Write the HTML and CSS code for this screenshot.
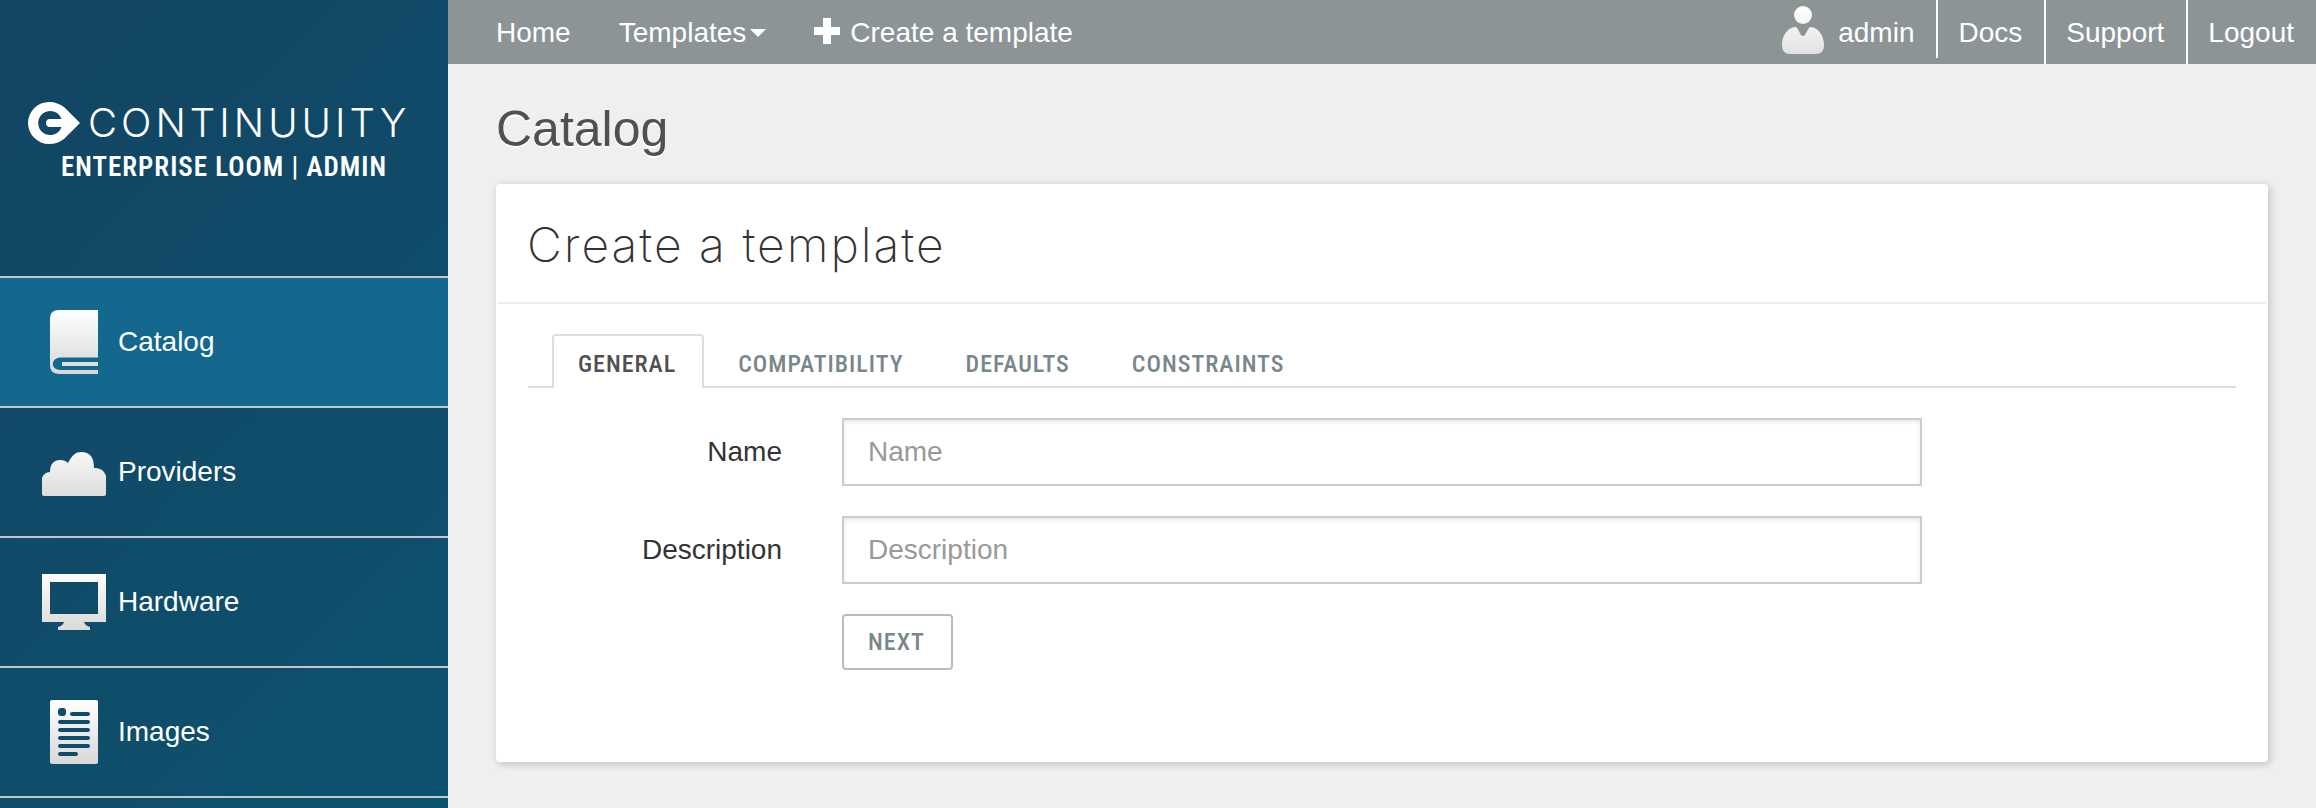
FILE: index.html
```html
<!DOCTYPE html>
<html lang="en">
<head>
<meta charset="utf-8">
<title>Create a template</title>
<link rel="stylesheet" href="styles.css">
</head>
<body>
<svg class="defs" aria-hidden="true">
  <defs>
    <linearGradient id="silver" x1="0" y1="0" x2="0" y2="64" gradientUnits="userSpaceOnUse">
      <stop offset="0" stop-color="#ffffff"/>
      <stop offset="1" stop-color="#d8d8d8"/>
    </linearGradient>
  </defs>
</svg>
<div class="layout">
  <aside class="sidebar">
    <div class="brand">
      <div class="logo">
        <svg class="logo-mark" viewBox="0 0 52 42" aria-hidden="true">
          <path fill="#fff" fill-rule="evenodd" d="M21 0C27 0 32 2 36 5L52 21L36 37C32 40 27 42 21 42A21 21 0 0 1 21 0ZM33.500 17A12 12 0 1 0 33.500 25H22A4 4 0 0 1 22 17Z"/>
        </svg>
        <span class="logo-word">CONTINUUITY</span>
      </div>
      <div class="product">ENTERPRISE LOOM | ADMIN</div>
    </div>
    <nav class="side-nav">
      <a class="side-link active" href="#catalog">
        <svg viewBox="0 0 64 64" fill="url(#silver)" aria-hidden="true"><path d="M17 0H56V47.500H18C8.500 48.500 8.500 59.500 18 60H56V64H17C11 64 8 60.500 8 55V9C8 3 11 0 17 0ZM20 52H56V56H20Z"/></svg>
        <span>Catalog</span>
      </a>
      <a class="side-link" href="#providers">
        <svg viewBox="0 0 64 64" fill="url(#silver)" aria-hidden="true"><path d="M0 54V38C1 35 4 32 8 32C8 24 12 20 18 20C22 20 24 21 26 23C30 15 34 12 39 12C48 12 52 17 52 28C58 28 62 30 64 36V54Q64 56 62 56H2Q0 56 0 54Z"/></svg>
        <span>Providers</span>
      </a>
      <a class="side-link" href="#hardware">
        <svg viewBox="0 0 64 64" fill="url(#silver)" aria-hidden="true"><path fill-rule="evenodd" d="M0 4H64V52H42C43 55 45 56 48 57V60H16V57C19 56 21 55 22 52H0ZM8 12V44H56V12Z"/></svg>
        <span>Hardware</span>
      </a>
      <a class="side-link" href="#images">
        <svg viewBox="0 0 64 64" aria-hidden="true"><rect x="8" width="48" height="64" rx="2" fill="url(#silver)"/><rect x="16" y="8" width="8" height="8" rx="3" fill="#0f4e6b"/><path d="M30 14H46M18 22H46M18 30H46M18 38H46M18 46H46M18 54H34" stroke="#0f4e6b" stroke-width="4" stroke-linecap="round"/></svg>
        <span>Images</span>
      </a>
    </nav>
  </aside>
  <div class="main">
    <header class="topbar">
      <nav class="menu">
        <a href="#home">Home</a>
        <a href="#templates">Templates<svg class="caret" viewBox="0 0 16 8" aria-hidden="true"><path fill="#fff" d="M0 0H16L8 8Z"/></svg></a>
        <a href="#create"><svg class="plus" viewBox="0 0 26 26" aria-hidden="true"><path fill="#fff" d="M9 0H17V9H26V17H17V26H9V17H0V9H9Z"/></svg>Create a template</a>
      </nav>
      <nav class="account">
        <span class="user">
          <svg viewBox="0 0 42 48" fill="url(#silver)" aria-hidden="true"><ellipse cx="21" cy="9" rx="9" ry="9"/><path d="M14 21C17 23 18 30 21 30S25 23 28 21C35 21 42 28 42 39C42 45 39 48 34 48H8C3 48 0 45 0 39C0 28 7 21 14 21Z"/></svg>
          <span>admin</span>
        </span>
        <a href="#docs">Docs</a>
        <a href="#support">Support</a>
        <a href="#logout">Logout</a>
      </nav>
    </header>
    <main class="content">
      <h1>Catalog</h1>
      <section class="panel">
        <h2>Create a template</h2>
        <div class="panel-body">
          <div class="tabs" role="tablist">
            <button class="tab selected" type="button" role="tab" aria-selected="true">GENERAL</button>
            <button class="tab" type="button" role="tab" aria-selected="false">COMPATIBILITY</button>
            <button class="tab" type="button" role="tab" aria-selected="false">DEFAULTS</button>
            <button class="tab" type="button" role="tab" aria-selected="false">CONSTRAINTS</button>
          </div>
          <form class="form">
            <label for="name">Name</label>
            <input id="name" type="text" placeholder="Name">
            <label for="description">Description</label>
            <input id="description" type="text" placeholder="Description">
            <button class="next" type="button">NEXT</button>
          </form>
        </div>
      </section>
    </main>
  </div>
</div>
</body>
</html>
```
FILE: styles.css
```css
* { box-sizing: border-box; }

body {
  margin: 0;
  background: #eef0ef;
  color: #333;
  font: 28px/40px "Liberation Sans", Arial, sans-serif;
}

a { color: inherit; text-decoration: none; }
svg { display: block; flex: none; }
.defs { position: absolute; width: 0; height: 0; }

.layout {
  display: grid;
  grid-template-columns: 448px minmax(0, 1fr);
  min-height: 100vh;
}

/* Sidebar */
.sidebar {
  background: linear-gradient(135deg, #134463, #0c536f);
  color: #fff;
}
.brand {
  height: 276px;
  padding: 102px 28px 0;
}
.logo { display: flex; align-items: center; gap: 8px; height: 42px; }
.logo-mark { width: 52px; height: 42px; }
.logo-word {
  font-family: Inter, "DejaVu Sans", sans-serif;
  font-size: 40px;
  font-weight: 300;
  letter-spacing: 4px;
}
.product {
  padding-top: 3px;
  font-family: "Roboto Condensed", "Liberation Sans Narrow", sans-serif;
  font-size: 27px;
  font-weight: 600;
  letter-spacing: 1px;
  text-align: center;
  white-space: nowrap;
}
.side-nav { border-bottom: 2px solid #c6c6c6; }
.side-link {
  display: flex;
  align-items: center;
  gap: 12px;
  height: 130px;
  padding: 0 42px;
  border-top: 2px solid #c6c6c6;
}
.side-link.active { background: #14678d; }
.side-link svg { width: 64px; height: 64px; }

/* Top bar */
.topbar {
  display: flex;
  justify-content: space-between;
  height: 64px;
  padding-left: 48px;
  background: #8c9495;
  color: #fff;
}
.menu, .account { display: flex; }
.menu { gap: 48px; }
.menu a, .account a, .user { display: flex; align-items: center; padding-top: 2px; }
.caret { width: 16px; height: 8px; margin-left: 4px; }
.plus { width: 26px; height: 26px; margin: 0 10px 4px 0; }
.account a { padding: 2px 22px 0 20px; border-left: 2px solid #fff; }
.account a:first-of-type { height: 58px; padding-top: 8px; }
.user { gap: 14px; padding-right: 22px; }
.user svg { width: 42px; height: 48px; margin-bottom: 6px; }

/* Content */
.content { padding: 35px 48px 46px; }
h1 {
  margin: 0 0 25px;
  color: #505050;
  font-size: 50px;
  font-weight: 400;
  line-height: 60px;
  text-shadow: 0 2px 0 #fff;
}
.panel {
  min-height: 578px;
  padding: 0 2px;
  border-radius: 4px;
  background: #fff;
  box-shadow: 2px 2px 8px rgba(0, 0, 0, .2);
}
h2 {
  margin: 0;
  padding: 31px 29px 27px;
  border-bottom: 2px solid #eee;
  font-family: Inter, Roboto, sans-serif;
  font-size: 48px;
  font-weight: 200;
  line-height: 60px;
  letter-spacing: 2px;
}
.panel-body { padding: 30px 30px 92px; }
.tabs {
  display: flex;
  gap: 8px;
  padding: 0 24px;
  border-bottom: 2px solid #ddd;
}
.tab, .next {
  font-family: "Roboto Condensed", "Liberation Sans Narrow", sans-serif;
  font-size: 24px;
  font-weight: 500;
  letter-spacing: 1px;
  color: #78878c;
  background: #fff;
}
.tab {
  height: 54px;
  margin-bottom: -2px;
  padding: 4px 26px 0 24px;
  border: 2px solid transparent;
  border-bottom: 0;
  border-radius: 4px 4px 0 0;
  background: none;
}
.tab.selected { border-color: #ddd; color: #505050; background: #fff; }

.form {
  display: grid;
  grid-template-columns: 254px 60px minmax(0, 1080fr) minmax(0, 314fr);
  align-items: center;
  row-gap: 30px;
  padding-top: 30px;
}
.form label { grid-column: 1; text-align: right; }
.form input {
  grid-column: 3;
  width: 100%;
  height: 68px;
  padding: 0 24px;
  border: 2px solid #ccc;
  border-radius: 0;
  background: #fff;
  box-shadow: inset 0 2px 4px rgba(0, 0, 0, .1);
  color: #333;
  font: inherit;
}
.form input::placeholder { color: #999; opacity: 1; }
.next {
  grid-column: 3;
  justify-self: start;
  height: 56px;
  padding: 0 26px 0 24px;
  border: 2px solid #bbb;
  border-radius: 4px;
}
```
